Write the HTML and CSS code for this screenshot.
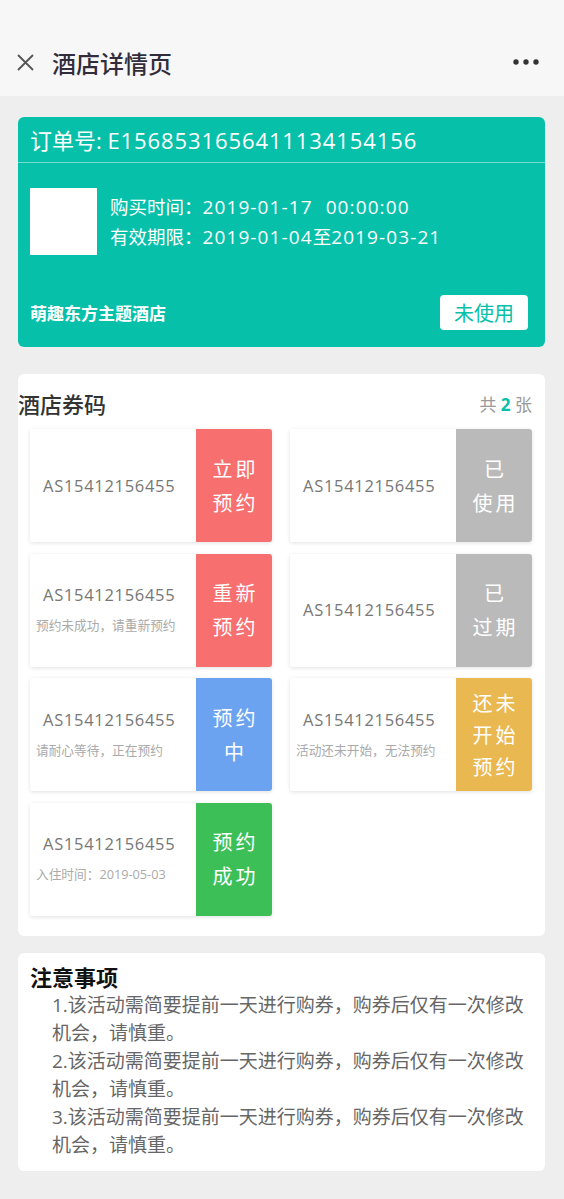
FILE: index.html
```html
<!DOCTYPE html>
<html lang="zh">
<head>
<meta charset="utf-8">
<link rel="stylesheet" href="styles.css">
</head>
<body>
<header class="nav">
  <svg class="nav-close" width="19" height="19" viewBox="0 0 19 19"><path d="M2 2L17 17M17 2L2 17" stroke="#555" stroke-width="1.8" fill="none"/></svg>
  <div class="nav-title">酒店详情页</div>
  <svg class="nav-more" width="28" height="8" viewBox="0 0 28 8"><circle cx="4" cy="4" r="2.7" fill="#333"/><circle cx="14" cy="4" r="2.7" fill="#333"/><circle cx="24" cy="4" r="2.7" fill="#333"/></svg>
</header>
<main class="page">
  <section class="order">
    <div class="order-no">订单号: <span class="num">E1568531656411134154156</span></div>
    <div class="order-body">
      <div class="order-pic"></div>
      <div class="order-info">
        <div>购买时间：<span class="num">2019-01-17</span><span class="num gap">00:00:00</span></div>
        <div>有效期限：<span class="num">2019-01-04</span>至<span class="num">2019-03-21</span></div>
      </div>
    </div>
    <div class="order-foot">
      <div class="hotel">萌趣东方主题酒店</div>
      <div class="state">未使用</div>
    </div>
  </section>

  <section class="codes">
    <div class="codes-head">
      <div class="codes-title">酒店券码</div>
      <div class="codes-count">共 <b>2</b> 张</div>
    </div>
    <div class="grid">
      <div class="coupon">
        <div class="coupon-main"><div class="code">AS15412156455</div></div>
        <div class="coupon-tag red"><span>立即</span><span>预约</span></div>
      </div>
      <div class="coupon">
        <div class="coupon-main"><div class="code">AS15412156455</div></div>
        <div class="coupon-tag gray"><span>已</span><span>使用</span></div>
      </div>
      <div class="coupon">
        <div class="coupon-main"><div class="code">AS15412156455</div><div class="sub">预约未成功，请重新预约</div></div>
        <div class="coupon-tag red"><span>重新</span><span>预约</span></div>
      </div>
      <div class="coupon">
        <div class="coupon-main"><div class="code">AS15412156455</div></div>
        <div class="coupon-tag gray"><span>已</span><span>过期</span></div>
      </div>
      <div class="coupon">
        <div class="coupon-main"><div class="code">AS15412156455</div><div class="sub">请耐心等待，正在预约</div></div>
        <div class="coupon-tag blue"><span>预约</span><span>中</span></div>
      </div>
      <div class="coupon">
        <div class="coupon-main"><div class="code">AS15412156455</div><div class="sub">活动还未开始，无法预约</div></div>
        <div class="coupon-tag yellow three"><span>还未</span><span>开始</span><span>预约</span></div>
      </div>
      <div class="coupon">
        <div class="coupon-main"><div class="code">AS15412156455</div><div class="sub">入住时间：2019-05-03</div></div>
        <div class="coupon-tag green"><span>预约</span><span>成功</span></div>
      </div>
    </div>
  </section>

  <section class="notes">
    <div class="notes-title">注意事项</div>
    <div class="notes-list">
      <p>1.该活动需简要提前一天进行购券，购券后仅有一次修改机会，请慎重。</p>
      <p>2.该活动需简要提前一天进行购券，购券后仅有一次修改机会，请慎重。</p>
      <p>3.该活动需简要提前一天进行购券，购券后仅有一次修改机会，请慎重。</p>
    </div>
  </section>
</main>
</body>
</html>
```

FILE: styles.css
```css
* { box-sizing: border-box; }
html, body { margin: 0; padding: 0; }
body {
  background: #eeeeee;
  font-family: "Open Sans", "Noto Sans CJK SC", sans-serif;
  color: #333;
  width: 564px;
  min-height: 1199px;
}
.nav {
  height: 96px;
  background: #f7f7f7;
  padding: 28px 24px 0 16px;
  display: flex;
  align-items: center;
}
.nav-close { flex: none; }
.nav-title {
  margin-left: 17px;
  font-size: 24px;
  font-weight: 500;
  color: #332d3b;
  font-family: "Noto Sans CJK SC", sans-serif;
  flex: 1;
}
.nav-more { flex: none; }

.page { padding: 21px 19px 26px 18px; }

.order {
  background: #06c0aa;
  border-radius: 6px;
  color: #fff;
}
.order-no {
  height: 46px;
  line-height: 46px;
  padding-left: 12px;
  font-size: 22px;
  border-bottom: 1px solid rgba(255,255,255,0.45);
}
.order-no .num { letter-spacing: 0.9px; }
.order-body {
  display: flex;
  padding: 25px 12px 0;
  gap: 13px;
}
.order-pic {
  width: 67px;
  height: 67px;
  background: #fff;
  flex: none;
}
.order-info {
  padding-top: 4px;
  font-size: 18.5px;
  line-height: 30px;
}
.order-info .num { letter-spacing: 1.1px; font-size: 19px; }
.order-info .gap { margin-left: 13px; }
.order-foot {
  display: flex;
  justify-content: space-between;
  align-items: center;
  padding: 40px 17px 17px 12px;
}
.hotel {
  font-size: 17px;
  font-weight: 700;
  font-family: "Noto Sans CJK SC", sans-serif;
}
.state {
  background: #fff;
  color: #06c0aa;
  font-size: 20px;
  width: 88px;
  height: 35px;
  line-height: 35px;
  text-align: center;
  border-radius: 4px;
  font-family: "Noto Sans CJK SC", sans-serif;
}

.codes {
  margin-top: 27px;
  background: #fff;
  border-radius: 6px;
  padding-bottom: 20px;
}
.codes-head {
  display: flex;
  justify-content: space-between;
  align-items: center;
  height: 46px;
  padding: 12px 13px 0 0;
}
.codes-title {
  font-size: 22px;
  font-weight: 500;
  color: #333;
  font-family: "Noto Sans CJK SC", sans-serif;
}
.codes-count {
  font-size: 17px;
  color: #999;
}
.codes-count b { color: #06c0aa; font-weight: 700; }
.grid {
  margin-top: 9px;
  padding: 0 13px 0 12px;
  display: grid;
  grid-template-columns: 1fr 1fr;
  grid-auto-rows: 113px;
  column-gap: 18px;
  row-gap: 11.5px;
}
.coupon {
  display: flex;
  border-radius: 3px;
  box-shadow: 0 1px 4px rgba(0,0,0,0.12);
  overflow: hidden;
}
.coupon-main {
  flex: 1;
  display: flex;
  flex-direction: column;
  justify-content: center;
  padding-left: 13px;
  background: #fff;
}
.code {
  font-size: 16.5px;
  color: #777;
  line-height: 30px;
  letter-spacing: 0.7px;
}
.sub {
  font-size: 12.7px;
  color: #aaa;
  line-height: 30px;
  margin-left: -7px;
  white-space: nowrap;
}
.coupon-tag {
  width: 76px;
  flex: none;
  display: flex;
  flex-direction: column;
  justify-content: center;
  align-items: center;
  color: #fff;
  font-size: 20px;
  line-height: 34px;
  letter-spacing: 3px;
  padding-left: 3px;
  font-family: "Noto Sans CJK SC", sans-serif;
}
.coupon-tag.three { line-height: 32px; }
.red { background: #f86f6f; }
.gray { background: #bababa; }
.blue { background: #6ba3f0; }
.yellow { background: #e9b850; }
.green { background: #3dbf58; }

.notes {
  margin-top: 17px;
  background: #fff;
  border-radius: 6px;
  padding: 8px 12px 12px 12px;
}
.notes-title {
  font-size: 22px;
  font-weight: 700;
  line-height: 30px;
  color: #111;
  font-family: "Noto Sans CJK SC", sans-serif;
}
.notes-list {
  padding-left: 22px;
  padding-right: 6px;
}
.notes-list p {
  margin: 0;
  font-size: 19px;
  line-height: 28px;
  color: #666;
}
```
